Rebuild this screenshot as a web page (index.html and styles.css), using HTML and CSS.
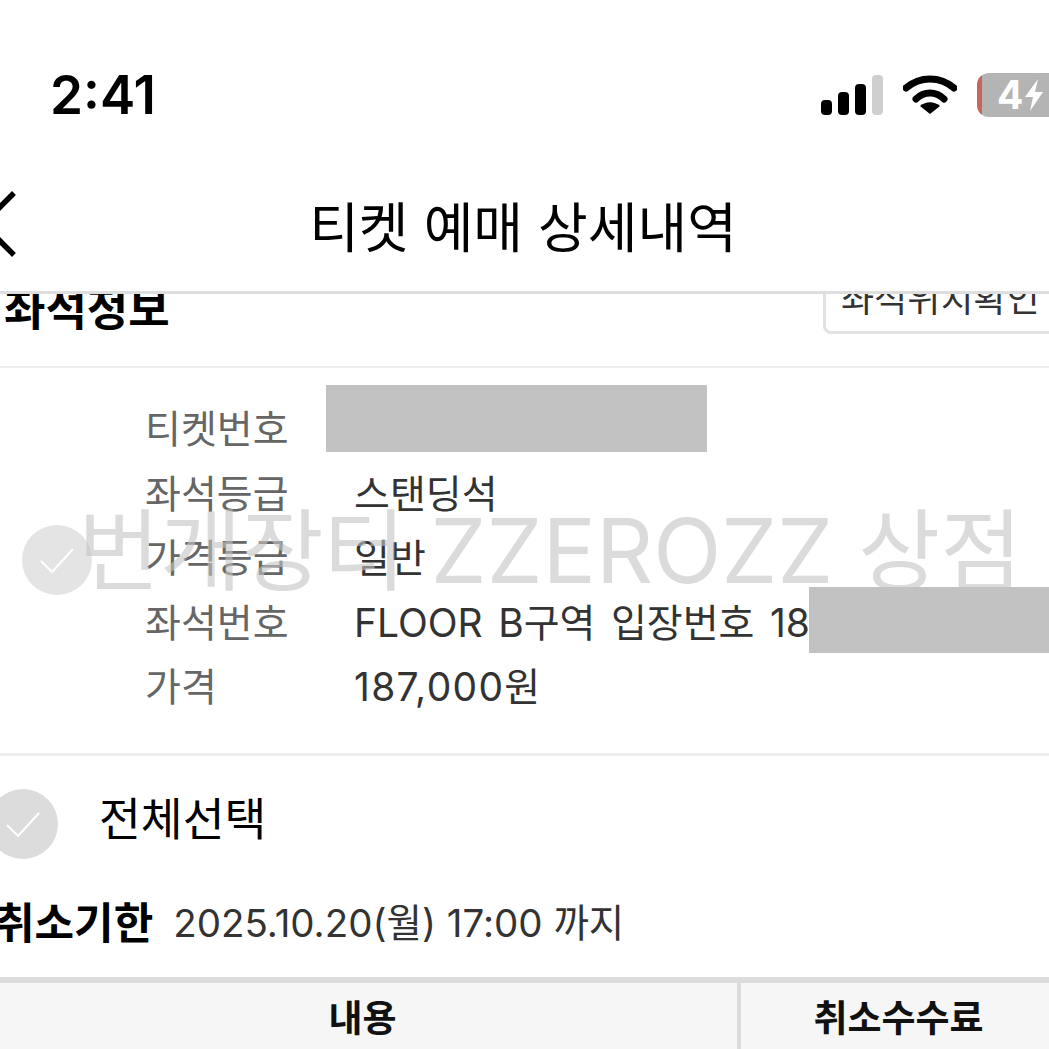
FILE: index.html
```html
<!DOCTYPE html>
<html lang="ko">
<head>
    <meta charset="UTF-8">
    <title>티켓 예매 상세내역</title>
    <meta name="viewport" content="width=device-width, initial-scale=1.0">
    <link rel="stylesheet" href="styles.css">
</head>
<body>
    <div class="status-bar">
        <div class="clock">2:41</div>
        <div class="status-icons">
            <svg class="signal" width="62" height="40" viewBox="0 0 62 40">
                <rect x="0" y="25" width="11" height="15" rx="4" fill="#000"/>
                <rect x="17" y="17" width="11" height="23" rx="4" fill="#000"/>
                <rect x="34" y="9" width="11" height="31" rx="4" fill="#000"/>
                <rect x="51" y="0" width="11" height="40" rx="4" fill="#cfcfcf"/>
            </svg>
            <svg class="wifi" width="54" height="40" viewBox="0 0 54 40">
                <path d="M3 13 C17 1 37 1 51 13" fill="none" stroke="#000" stroke-width="7" stroke-linecap="round"/>
                <path d="M13 24 C21 16 33 16 41 24" fill="none" stroke="#000" stroke-width="7" stroke-linecap="round"/>
                <path d="M27 39 L17 31 C23 26 31 26 37 31 Z" fill="#000"/>
            </svg>
            <div class="battery">
                <span class="battery-level"></span>
                <span class="battery-text">4</span>
                <svg width="20" height="32" viewBox="0 0 20 32">
                    <path d="M14 0 L1 18 H9 L6 32 L19 13 H11 Z" fill="#fff"/>
                </svg>
            </div>
        </div>
    </div>

    <div class="nav-bar">
        <svg class="back" width="20" height="64" viewBox="0 0 20 64">
            <path d="M12 3 L-17 32 L12 61" fill="none" stroke="#000" stroke-width="5.5" stroke-linecap="square"/>
        </svg>
        <div class="nav-title">티켓 예매 상세내역</div>
    </div>

    <div class="content">
        <div class="section-head">
            <div class="section-title">좌석정보</div>
            <button class="seat-btn">좌석위치확인</button>
        </div>

        <div class="seat-info">
            <div class="info-row"><span class="label">티켓번호</span><span class="value"></span></div>
            <div class="info-row"><span class="label">좌석등급</span><span class="value">스탠딩석</span></div>
            <div class="info-row"><span class="label">가격등급</span><span class="value">일반</span></div>
            <div class="info-row"><span class="label">좌석번호</span><span class="value">FLOOR B구역 입장번호 18</span></div>
            <div class="info-row"><span class="label">가격</span><span class="value value-price">187,000원</span></div>
            <div class="redact redact-ticket"></div>
            <div class="redact redact-seat"></div>
            <div class="check check-row">
                <svg width="36" height="28" viewBox="0 0 36 28"><path d="M2 15 L13 26 L34 3" fill="none" stroke="#fff" stroke-width="2"/></svg>
            </div>
        </div>

        <div class="select-all">
            <div class="check">
                <svg width="36" height="28" viewBox="0 0 36 28"><path d="M2 15 L13 26 L34 3" fill="none" stroke="#fff" stroke-width="2"/></svg>
            </div>
            <span class="select-text">전체선택</span>
        </div>

        <div class="deadline">
            <span class="deadline-title">취소기한</span>
            <span class="deadline-date">2025.10.20(월) 17:00 까지</span>
        </div>

        <div class="fee-head">
            <div class="fee-col">내용</div>
            <div class="fee-col fee-col-right">취소수수료</div>
        </div>
    </div>

    <div class="watermark">번개장터 ZZEROZZ 상점</div>
</body>
</html>
```

FILE: styles.css
```css
html, body {
    height: 100%;
}
body {
    margin: 0;
    padding: 0;
    background: #fff;
    color: #000;
    font-family: Inter, 'Noto Sans CJK KR', sans-serif;
    overflow: hidden;
    position: relative;
}
.status-bar {
    height: 165px;
    display: flex;
    align-items: center;
    justify-content: space-between;
    padding: 0 0 0 50px;
    box-sizing: border-box;
    padding-top: 24px;
}
.clock {
    font-size: 53px;
    font-weight: 600;
    line-height: 60px;
}
.status-icons {
    display: flex;
    align-items: center;
    gap: 20px;
    margin-right: -32px;
}
.signal {
    margin-left: -2px;
}
.battery {
    width: 104px;
    height: 44px;
    background: #b4b4b4;
    border-radius: 12px;
    display: flex;
    align-items: center;
    padding-left: 20px;
    box-sizing: border-box;
    gap: 1px;
    position: relative;
    overflow: hidden;
}
.battery-level {
    position: absolute;
    left: 0;
    top: 0;
    bottom: 0;
    width: 5px;
    background: #c8665c;
}
.battery-text {
    color: #fff;
    font-size: 39px;
    font-weight: 700;
    line-height: 44px;
}
.nav-bar {
    height: 129px;
    box-sizing: border-box;
    border-bottom: 3px solid #dedede;
    display: flex;
    align-items: center;
    justify-content: center;
    position: relative;
}
.back {
    position: absolute;
    left: 0;
    top: 27px;
    overflow: visible;
}
.nav-title {
    font-size: 54px;
    font-family: 'Noto Sans CJK KR', sans-serif;
    font-weight: 400;
    margin: -7px 3px 0 0;
}
.content {
    height: 755px;
    overflow: hidden;
}
.section-head {
    height: 72px;
    display: flex;
    align-items: flex-start;
    justify-content: space-between;
    border-bottom: 2px solid #eee;
}
.section-title {
    font-family: 'Noto Sans CJK KR', sans-serif;
    font-weight: 700;
    font-size: 45px;
    line-height: 40px;
    margin: -7px 0 0 4px;
}
.seat-btn {
    width: 240px;
    height: 61px;
    margin: -21px -14px 0 0;
    background: #fff;
    border: 3px solid #e2e2e2;
    border-radius: 8px;
    font-family: 'Noto Sans CJK KR', sans-serif;
    font-size: 36px;
    line-height: 30px;
    color: #333;
    padding: 0 0 16px 15px;
    white-space: nowrap;
    text-align: left;
}
.seat-info {
    height: 388px;
    box-sizing: border-box;
    padding-top: 26px;
    border-bottom: 3px solid #eee;
}
.info-row {
    height: 64.5px;
    display: flex;
    align-items: center;
    font-size: 39px;
    white-space: nowrap;
}
.label {
    width: 209px;
    margin-left: 145px;
    color: #666;
}
.value {
    color: #333;
    word-spacing: 4.5px;
}
.value-price {
    letter-spacing: 1.3px;
}
.redact {
    position: absolute;
    background: #c2c2c2;
}
.redact-ticket {
    left: 326px;
    top: 385px;
    width: 381px;
    height: 67px;
}
.redact-seat {
    left: 809px;
    top: 587px;
    width: 240px;
    height: 66px;
}
.check {
    width: 70px;
    height: 70px;
    border-radius: 50%;
    background: #dcdcdc;
    display: flex;
    align-items: center;
    justify-content: center;
    flex-shrink: 0;
}
.check-row {
    position: absolute;
    left: 22px;
    top: 525px;
    background: #e4e4e4;
}
.select-all {
    display: flex;
    align-items: center;
    gap: 41px;
    margin: 33px 0 0 -12px;
    font-size: 45.5px;
    font-family: 'Noto Sans CJK KR', sans-serif;
}
.select-text {
    line-height: 60px;
    margin-top: -16px;
}
.deadline {
    display: flex;
    align-items: center;
    gap: 20px;
    margin: 30px 0 0 -5px;
    white-space: nowrap;
    height: 62px;
}
.deadline-title {
    font-family: 'Noto Sans CJK KR', sans-serif;
    font-size: 43px;
    font-weight: 700;
}
.deadline-date {
    font-size: 38.5px;
    color: #333;
}
.fee-head {
    display: flex;
    margin-top: 26px;
    background: #f6f6f6;
    border-top: 6px solid #dcdcdc;
    height: 70px;
}
.fee-col {
    width: 725px;
    text-align: center;
    font-family: 'Noto Sans CJK KR', sans-serif;
    font-size: 37px;
    font-weight: 700;
    line-height: 66px;
    color: #111;
}
.fee-col-right {
    flex: 1;
    border-left: 4px solid #dcdcdc;
    margin-left: 12px;
    padding-left: 7px;
}
.watermark {
    position: absolute;
    left: 78px;
    top: 491px;
    font-size: 89px;
    line-height: 120px;
    color: rgba(195, 195, 195, 0.6);
    white-space: nowrap;
    font-family: Inter, 'Noto Sans CJK KR', sans-serif;
    font-weight: 400;
}
```
